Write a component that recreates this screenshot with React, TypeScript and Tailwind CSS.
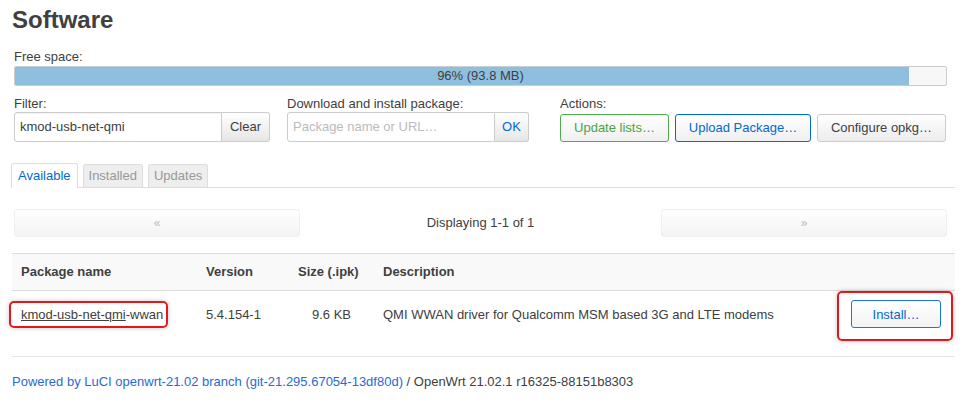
import React from "react";

const font = { fontFamily: '"Liberation Sans", Arial, sans-serif' };

export default function App() {
  return (
    <div className="w-[966px] h-[414px] bg-white text-[#404040] overflow-hidden text-[13px]" style={font}>
      <div className="pl-3 pr-[11px] pt-[5px]">
        <h2 className="text-[24px] font-bold leading-[30px] text-[#404040]">Software</h2>

        <div className="pl-[2px] pr-[8px]">
          <div className="mt-[14px] text-[13px] leading-[15px] text-[#404040]">Free space:</div>
          <div className="mt-[2px] h-[20px] border border-[#ccc] rounded-[2px] bg-[#f7f7f7] relative overflow-hidden">
            <div className="h-full w-[96%] bg-[#8fbfdf]" />
            <div className="absolute inset-0 flex items-center justify-center text-[13px] text-[#404040]">96% (93.8 MB)</div>
          </div>

          <div className="mt-[10px] flex">
            <div className="w-[273px] shrink-0 flex flex-col">
              <div className="text-[13px] leading-[15px]">Filter:</div>
              <div className="mt-[1px] flex h-[30px] w-[256px]">
                <div className="flex-1 border border-[#ccc] rounded-l-[3px] flex items-center px-[5px] text-[13px] text-[#404040] shadow-[inset_0_1px_1px_rgba(0,0,0,0.05)]">kmod-usb-net-qmi</div>
                <div className="w-[48px] border border-l-0 border-[#ccc] rounded-r-[3px] bg-gradient-to-b from-white to-[#e6e6e6] flex items-center justify-center text-[13px] text-[#404040]">Clear</div>
              </div>
            </div>
            <div className="w-[273px] shrink-0 flex flex-col">
              <div className="text-[13px] leading-[15px]">Download and install package:</div>
              <div className="mt-[1px] flex h-[30px] w-[242px]">
                <div className="flex-1 border border-[#ccc] rounded-l-[3px] flex items-center px-[5px] text-[13px] text-[#bbb]">Package name or URL…</div>
                <div className="w-[34px] border border-l-0 border-[#ccc] rounded-r-[3px] bg-gradient-to-b from-white to-[#e6e6e6] flex items-center justify-center text-[13px] text-[#0069d6]">OK</div>
              </div>
            </div>
            <div className="flex flex-col shrink-0">
              <div className="text-[13px] leading-[15px]">Actions:</div>
              <div className="mt-[3px] flex gap-[6px] h-[28px]">
                <div className="w-[109px] border border-[#4cae4c] rounded-[3px] bg-gradient-to-b from-white to-[#f0f0f0] flex items-center justify-center text-[13px] text-[#46a546]">Update lists…</div>
                <div className="w-[136px] border border-[#0069d6] rounded-[3px] bg-gradient-to-b from-white to-[#f0f0f0] flex items-center justify-center text-[13px] text-[#0069d6]">Upload Package…</div>
                <div className="w-[129px] border border-[#ccc] rounded-[3px] bg-gradient-to-b from-white to-[#ececec] flex items-center justify-center text-[13px] text-[#404040]">Configure opkg…</div>
              </div>
            </div>
          </div>
        </div>

        <div className="mt-[21px] flex items-end border-b border-[#ddd] h-[25px] -ml-[1px]">
          <div className="h-[25px] px-[6px] border border-b-0 border-[#ddd] rounded-t-[3px] bg-white -mb-px flex items-center text-[13px] text-[#0069d6]">Available</div>
          <div className="ml-[5px] h-[23px] px-[5px] border border-b-0 border-[#ddd] rounded-t-[3px] bg-[#eee] flex items-center text-[13px] text-[#999]">Installed</div>
          <div className="ml-[5px] h-[23px] px-[5px] border border-b-0 border-[#ddd] rounded-t-[3px] bg-[#eee] flex items-center text-[13px] text-[#999]">Updates</div>
        </div>

        <div className="mt-[21px] pl-[2px] pr-[8px] flex items-center">
          <div className="w-[286px] h-[28px] rounded-[3px] border border-[#f0f0f0] bg-gradient-to-b from-white to-[#f3f3f3] flex items-center justify-center text-[12px] text-[#bbb]">«</div>
          <div className="flex-1 text-center text-[13px] text-[#404040]">Displaying 1-1 of 1</div>
          <div className="w-[286px] h-[28px] rounded-[3px] border border-[#f0f0f0] bg-gradient-to-b from-white to-[#f3f3f3] flex items-center justify-center text-[12px] text-[#bbb]">»</div>
        </div>

        <div className="mt-[16px] w-[943px]">
          <div className="flex h-[38px] items-center bg-[#f9f9f9] border-y border-[#ddd] text-[13px] font-bold">
            <div className="w-[185px] pl-[9px]">Package name</div>
            <div className="w-[92px] pl-[9px]">Version</div>
            <div className="w-[85px] pl-[9px]">Size (.ipk)</div>
            <div className="pl-[9px]">Description</div>
          </div>
          <div className="flex h-[46px] items-center text-[13px] leading-[15px]">
            <div className="w-[185px] pl-[9px] relative">
              <span className="underline">kmod-usb-net-qmi</span>-wwan
              <div className="absolute left-[-3px] top-[-6px] w-[159px] h-[27px] border-2 border-[#e8161b] rounded-[5px] shadow-[0_0_5px_rgba(0,0,0,0.22)]" />
            </div>
            <div className="w-[92px] pl-[9px]">5.4.154-1</div>
            <div className="w-[85px] text-center">9.6 KB</div>
            <div className="flex-1 pl-[9px]">QMI WWAN driver for Qualcomm MSM based 3G and LTE modems</div>
            <div className="w-[114px] pr-[14px] flex justify-end relative">
              <div className="w-[90px] h-[28px] border border-[#1a73e8] rounded-[3px] bg-gradient-to-b from-white to-[#f3f3f3] flex items-center justify-center text-[13px] text-[#0069d6]">Install…</div>
              <div className="absolute left-[-4px] top-[-9px] w-[116px] h-[50px] border-2 border-[#e8161b] rounded-[5px] shadow-[0_0_5px_rgba(0,0,0,0.22)]" />
            </div>
          </div>
          <div className="h-[20px] border-b border-[#e5e5e5]" />
        </div>

        <div className="mt-[17px] text-[13px] leading-[15px]">
          <span className="text-[#2a6ad0]">Powered by LuCI openwrt-21.02 branch (git-21.295.67054-13df80d)</span>
          <span className="text-[#404040]"> / OpenWrt 21.02.1 r16325-88151b8303</span>
        </div>
      </div>
    </div>
  );
}
